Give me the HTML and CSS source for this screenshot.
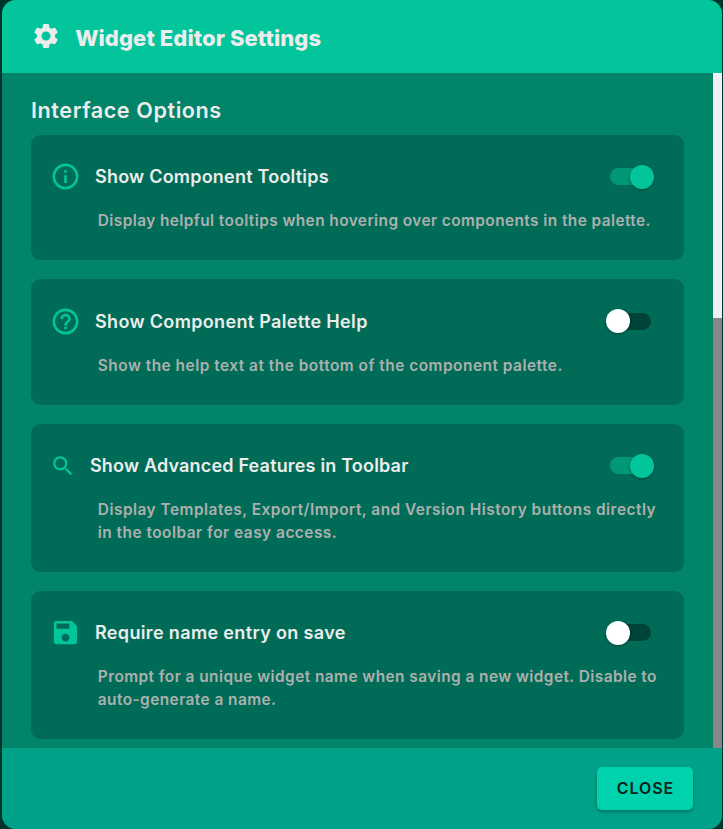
FILE: index.html
```
<!DOCTYPE html>
<html lang="en">
<head>
<meta charset="utf-8">
<title>Widget Editor Settings</title>
<link rel="stylesheet" href="styles.css">
</head>
<body>
<div class="dialog">
  <header class="header">
    <svg class="gear" viewBox="0 0 24 24"><path d="M19.14 12.94c.04-.3.06-.61.06-.94 0-.32-.02-.64-.07-.94l2.03-1.58c.18-.14.23-.41.12-.61l-1.92-3.32c-.12-.22-.37-.29-.59-.22l-2.39.96c-.5-.38-1.03-.7-1.62-.94l-.36-2.54c-.04-.24-.24-.41-.48-.41h-3.84c-.24 0-.43.17-.47.41l-.36 2.54c-.59.24-1.13.57-1.62.94l-2.39-.96c-.22-.08-.47 0-.59.22L2.74 8.87c-.12.21-.08.47.12.61l2.03 1.58c-.05.3-.09.63-.09.94s.02.64.07.94l-2.03 1.58c-.18.14-.23.41-.12.61l1.92 3.32c.12.22.37.29.59.22l2.39-.96c.5.38 1.03.7 1.62.94l.36 2.54c.05.24.24.41.48.41h3.84c.24 0 .44-.17.47-.41l.36-2.54c.59-.24 1.13-.56 1.62-.94l2.39.96c.22.08.47 0 .59-.22l1.92-3.32c.12-.22.07-.47-.12-.61zM12 15.6c-1.98 0-3.6-1.62-3.6-3.6s1.62-3.6 3.6-3.6 3.6 1.62 3.6 3.6-1.62 3.6-3.6 3.6"/></svg>
    <h1 class="title">Widget Editor Settings</h1>
  </header>
  <div class="body">
    <main class="content">
      <h2 class="section">Interface Options</h2>
      <section class="card">
        <div class="row">
          <svg class="icon" viewBox="0 0 24 24"><path d="M11 7h2v2h-2zm0 4h2v6h-2zm1-9C6.48 2 2 6.48 2 12s4.48 10 10 10 10-4.48 10-10S17.52 2 12 2m0 18c-4.41 0-8-3.59-8-8s3.59-8 8-8 8 3.59 8 8-3.59 8-8 8"/></svg>
          <h3 class="name n1">Show Component Tooltips</h3>
          <span class="switch on"><span class="thumb"></span></span>
        </div>
        <p class="desc d1">Display helpful tooltips when hovering over components in the palette.</p>
      </section>
      <section class="card">
        <div class="row">
          <svg class="icon" viewBox="0 0 24 24"><path d="M11 18h2v-2h-2zm1-16C6.48 2 2 6.48 2 12s4.48 10 10 10 10-4.48 10-10S17.52 2 12 2m0 18c-4.41 0-8-3.59-8-8s3.59-8 8-8 8 3.59 8 8-3.59 8-8 8m0-14c-2.21 0-4 1.79-4 4h2c0-1.1.9-2 2-2s2 .9 2 2c0 2-3 1.75-3 5h2c0-2.25 3-2.5 3-5 0-2.21-1.79-4-4-4"/></svg>
          <h3 class="name n2">Show Component Palette Help</h3>
          <span class="switch"><span class="thumb"></span></span>
        </div>
        <p class="desc d2">Show the help text at the bottom of the component palette.</p>
      </section>
      <section class="card tall">
        <div class="row">
          <svg class="icon search" viewBox="0 0 24 24"><path d="M15.5 14h-.79l-.28-.27C15.41 12.59 16 11.11 16 9.5 16 5.91 13.09 3 9.5 3S3 5.91 3 9.5 5.91 16 9.5 16c1.61 0 3.09-.59 4.23-1.57l.27.28v.79l5 4.99L20.49 19zm-6 0C7.01 14 5 11.99 5 9.5S7.01 5 9.5 5 14 7.01 14 9.5 11.99 14 9.5 14"/></svg>
          <h3 class="name n3">Show Advanced Features in Toolbar</h3>
          <span class="switch on"><span class="thumb"></span></span>
        </div>
        <p class="desc d3">Display Templates, Export/Import, and Version History buttons directly<br>in the toolbar for easy access.</p>
      </section>
      <section class="card tall">
        <div class="row">
          <svg class="icon" viewBox="0 0 24 24"><path d="M17 3H5c-1.11 0-2 .9-2 2v14c0 1.1.89 2 2 2h14c1.1 0 2-.9 2-2V7zm-5 16c-1.66 0-3-1.34-3-3s1.34-3 3-3 3 1.34 3 3-1.34 3-3 3m3-10H5V5h10z"/></svg>
          <h3 class="name n4">Require name entry on save</h3>
          <span class="switch"><span class="thumb"></span></span>
        </div>
        <p class="desc d4">Prompt for a unique widget name when saving a new widget. Disable to<br>auto-generate a name.</p>
      </section>
    </main>
    <div class="scrollbar"><div class="scroll-thumb"></div></div>
  </div>
  <footer class="footer"><button class="close">CLOSE</button></footer>
</div>
</body>
</html>
```

FILE: styles.css
```
* { box-sizing: border-box; }
body {
  margin: 0;
  height: 829px;
  padding: 0 1px 0 2px;
  overflow: hidden;
  background: #00352d;
  font-family: Inter, sans-serif;
  color: #ececec;
}
h1, h2, h3, p { margin: 0; white-space: nowrap; }
.dialog {
  display: flex;
  flex-direction: column;
  height: 829px;
  border-radius: 14px;
  overflow: hidden;
  background: #028469;
}
.header {
  display: flex;
  align-items: center;
  height: 73px;
  padding-left: 29.3px;
  background: #02c59b;
}
.gear { width: 30px; height: 30px; margin-top: -1px; fill: #ececec; }
.title { margin: 2px 0 0 13.9px; font-size: 22px; font-weight: 800; line-height: 28px; letter-spacing: .08px; }
.body { display: flex; height: 675px; }
.content {
  flex: 1;
  display: flex;
  flex-direction: column;
  gap: 19.2px;
  padding: 23px 29px 0;
}
.section { height: 39px; margin-bottom: -19.4px; font-size: 21.6px; line-height: 28px; font-weight: 600; letter-spacing: .57px; }
.card {
  flex: none;
  height: 125.3px;
  padding: 22px 20px 0 19.6px;
  border-radius: 9.6px;
  background: #006c58;
}
.card.tall { height: 147.8px; }
.row { display: flex; align-items: center; height: 40px; }
.icon { flex: none; width: 31px; height: 31px; margin-left: -1px; fill: #02c59b; }
.icon.search { width: 26px; height: 26px; }
.name { margin: 1px 0 0 14.4px; font-size: 18px; font-weight: 600; line-height: 26px; }
.n1 { letter-spacing: .22px; }
.n2 { letter-spacing: .34px; }
.n3 { letter-spacing: .18px; }
.n4 { letter-spacing: .35px; }
.desc { margin: 12.3px 0 0 47.2px; font-size: 15.4px; line-height: 23px; font-weight: 600; color: #adb0ae; }
.d1 { letter-spacing: .43px; }
.d2 { letter-spacing: .51px; }
.d3 { letter-spacing: .5px; }
.d4 { letter-spacing: .45px; }
.switch {
  flex: none;
  width: 41px;
  height: 17px;
  margin-left: auto;
  margin-right: 13px;
  border-radius: 9px;
  background: #004439;
}
.thumb {
  display: block;
  width: 24px;
  height: 24px;
  margin: -3.6px 0 0 -4px;
  border-radius: 50%;
  background: #fff;
  box-shadow: 0 1px 3px rgba(0, 0, 0, .35);
}
.switch.on { background: #019777; }
.switch.on .thumb { margin-left: 20px; background: #02c59b; }
.scrollbar { width: 9px; background: #878787; }
.scroll-thumb { height: 245px; background: #f1f1f1; }
.footer {
  display: flex;
  justify-content: flex-end;
  height: 81px;
  padding: 19px 29px 0 0;
  background: #00a38a;
}
.close {
  width: 96px;
  height: 43px;
  border: 0;
  padding: 0 0 1px 1px;
  border-radius: 5px;
  background: #00d2ad;
  color: #10211d;
  font: 600 16px/42px Inter, sans-serif;
  letter-spacing: .9px;
  box-shadow: 0 2px 4px rgba(0, 0, 0, .3);
}
```
